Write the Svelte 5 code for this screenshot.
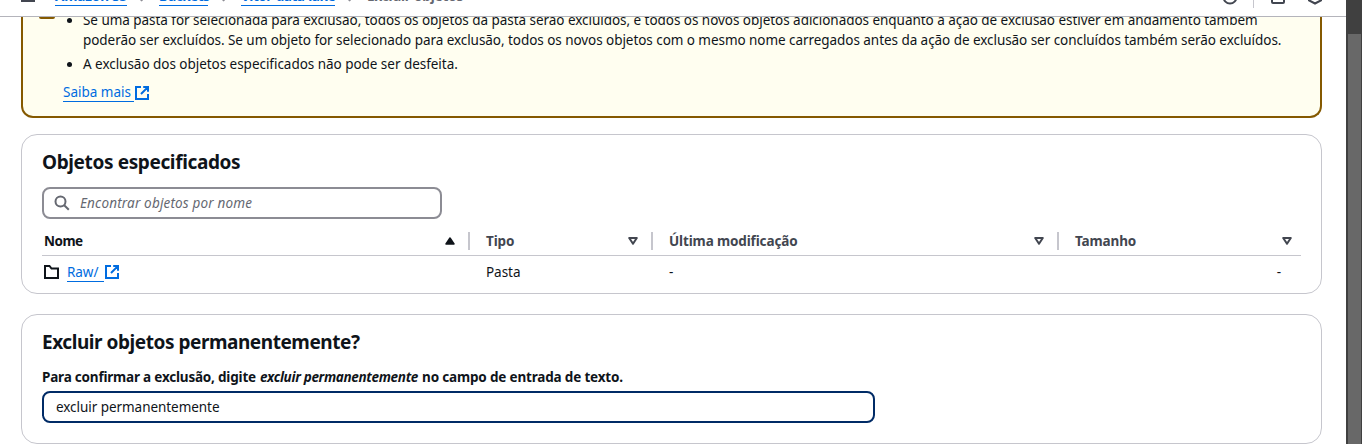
<script>
  const crumbs = ['Amazon S3', 'Buckets', 'Vitor-data-lake'];
  const columns = [
    { label: 'Nome', cls: 'nome', sorted: true },
    { label: 'Tipo', cls: 'tipo' },
    { label: 'Última modificação', cls: 'mod' },
    { label: 'Tamanho', cls: 'tam' }
  ];
  let search = $state('');
  let confirmation = $state('excluir permanentemente');
</script>

{#snippet external()}
  <svg class="external" viewBox="0 0 16 16"><path d="M7 2H2v12h12V9M9.200 2H14v4.800M7 9l6.600-6.600" /></svg>
{/snippet}

<div class="page">
  <div class="main">
    <header>
      <svg class="menu" viewBox="0 0 14 14"><path d="M0 1h14M0 6h14M0 13h14" stroke="#424650" stroke-width="2" /></svg>
      <nav>
        {#each crumbs as c, i}
          <a class="c{i}" href="#top">{c}</a>
          <svg class="chev" viewBox="0 0 6 12"><path d="M1 1l4 5-4 5" /></svg>
        {/each}
        <span class="here">Excluir objetos</span>
      </nav>
      <div class="tools">
        <svg class="t1" viewBox="0 0 16 16"><circle cx="8" cy="8" r="6.5" /></svg>
        <i></i>
        <svg class="t2" viewBox="0 0 16 16"><rect x="2" y="2" width="12" height="12" rx="1" /></svg>
        <svg class="t3" viewBox="0 0 16 16"><path d="M8 1.500l6 3.200v6.600l-6 3.200-6-3.200V4.700z" /></svg>
      </div>
    </header>

    <section class="alert">
      <span class="warn"></span>
      <div class="copy">
        <ul>
          <li>
            <span class="l1">Se uma pasta for selecionada para exclusão, todos os objetos da pasta serão excluídos, e todos os novos objetos adicionados enquanto a ação de exclusão estiver em andamento também</span>
            <span class="l2">poderão ser excluídos. Se um objeto for selecionado para exclusão, todos os novos objetos com o mesmo nome carregados antes da ação de exclusão ser concluídos também serão excluídos.</span>
          </li>
          <li><span class="l3">A exclusão dos objetos especificados não pode ser desfeita.</span></li>
        </ul>
        <a class="link more" href="#more"><span>Saiba mais</span>{@render external()}</a>
      </div>
    </section>

    <section class="card objects">
      <h2>Objetos especificados</h2>
      <label class="search">
        <svg viewBox="0 0 16 16"><circle cx="6.500" cy="6.500" r="5" /><path d="M10.200 10.200l4.600 4.600" /></svg>
        <input placeholder="Encontrar objetos por nome" bind:value={search} />
      </label>
      <div class="row head">
        {#each columns as c}
          <div class="cell {c.cls}">
            <b>{c.label}</b>
            {#if c.sorted}
              <svg class="sort" viewBox="0 0 10 8"><path d="M5 1L9 7H1z" fill="#0f141a" stroke="#0f141a" stroke-width="1.500" stroke-linejoin="round" /></svg>
            {:else}
              <svg class="sort" viewBox="0 0 10 8"><path d="M1.200 1H8.800L5 6.800z" fill="none" stroke="#424650" stroke-width="2" stroke-linejoin="round" /></svg>
            {/if}
          </div>
        {/each}
      </div>
      <div class="row body">
        <div class="cell nome">
          <svg class="folder" viewBox="0 0 16 16"><path d="M2 14V2h4.500l2 2.500H15V14z" /></svg>
          <a class="link raw" href="#raw"><span>Raw/</span>{@render external()}</a>
        </div>
        <div class="cell tipo">Pasta</div>
        <div class="cell mod">-</div>
        <div class="cell tam">-</div>
      </div>
    </section>

    <section class="card confirm">
      <h2>Excluir objetos permanentemente?</h2>
      <label class="ask" for="confirm"><span>Para confirmar a exclusão, digite</span><em>excluir permanentemente</em><span class="end">no campo de entrada de texto.</span></label>
      <input id="confirm" bind:value={confirmation} />
    </section>
  </div>
  <div class="scroll"><div class="thumb"></div></div>
</div>

<style>
  :global(body) { background: #fff; overflow: hidden; }
  * { box-sizing: border-box; }
  .page {
    display: flex; height: 444px; overflow: hidden; background: #fff; color: #0f141a;
    font: 13.5px/20px "Noto Sans", sans-serif; letter-spacing: -0.05px;
  }
  .main { flex: 1; min-width: 0; display: flex; flex-direction: column; }
  svg { display: block; flex: none; fill: none; }
  header {
    flex: none; height: 17px; overflow: hidden; border-bottom: 1px solid #b4b4bb;
    display: flex; align-items: flex-end; padding-left: 21px;
  }
  .menu { width: 14px; height: 14px; margin-bottom: 14px; }
  nav { display: flex; align-items: center; height: 20px; margin: 0 0 10px 20px; font-weight: 700; }
  nav a { color: #006ce0; text-decoration: none; border-bottom: 1px solid #006ce0; height: 20px; line-height: 20px; white-space: nowrap; }
  .c0 { width: 72px; letter-spacing: -0.1px; }
  .c1 { width: 49px; letter-spacing: -0.5px; }
  .c2 { width: 94px; letter-spacing: -0.46px; }
  .chev { width: 6px; height: 12px; margin: 0 13px; stroke: #8c8c94; stroke-width: 2; }
  .c1 + .chev { margin-left: 14px; }
  .here { color: #656871; letter-spacing: -0.17px; }
  .tools { margin-left: auto; display: flex; align-items: flex-end; stroke: #424650; stroke-width: 2; }
  .tools svg { width: 16px; height: 16px; margin-bottom: 11px; }
  .tools i { width: 1px; height: 24px; background: #c6c6cd; margin: 0 16px 8px 15px; }
  .tools .t3 { margin-left: 21px; margin-right: 23px; }

  .alert {
    flex: none; width: 1301px; height: 101px; margin-left: 21px; overflow: hidden; display: flex;
    border: 2px solid #855900; border-top: 0; border-radius: 0 0 12px 12px; background: #fffef0;
  }
  .warn { width: 16px; height: 16px; margin: -14px 8px 0 16px; border: 2px solid #855900; border-radius: 2px; flex: none; }
  .copy { margin-top: -7px; }
  ul { margin: 0; padding: 0 0 0 20px; }
  li + li { margin-top: 4px; }
  li span { display: block; white-space: nowrap; }
  .l1 { letter-spacing: -0.041px; }
  .l2 { letter-spacing: -0.053px; }
  .l3 { letter-spacing: -0.035px; }
  .link { display: flex; align-items: center; color: #006ce0; text-decoration: none; }
  .link span { border-bottom: 1px solid #006ce0; height: 19px; line-height: 18px; }
  .more { margin-top: 9px; }
  .more span { width: 71px; letter-spacing: 0; }
  .raw span { width: 37px; }
  .external { width: 16px; height: 16px; stroke: #006ce0; stroke-width: 2; }

  .card { flex: none; width: 1301px; margin-left: 21px; padding: 0 20px; border: 1px solid #c6c6cd; border-radius: 16px; }
  .objects { height: 160px; margin-top: 16px; }
  .confirm { height: 130px; margin-top: 20px; }
  h2 { margin: 15px 0 0; font-size: 19px; line-height: 24px; letter-spacing: -0.45px; }
  .objects h2 { letter-spacing: -0.37px; }
  .search { display: flex; align-items: center; width: 400px; height: 32px; margin-top: 13px; border: 2px solid #8c8c94; border-radius: 8px; padding-left: 10px; }
  .search svg { width: 16px; height: 16px; stroke: #656871; stroke-width: 2; }
  input { font: inherit; color: inherit; letter-spacing: inherit; outline: 0; }
  .search input { flex: 1; border: 0; padding: 0; margin-left: 10px; background: none; }
  .search input::placeholder { color: #656871; font-style: italic; letter-spacing: 0.17px; opacity: 1; }
  .row { display: grid; grid-template-columns: 428px 183px 406px 242px; }
  .head { height: 37px; border-bottom: 1px solid #c6c6cd; padding-top: 13px; }
  .head .cell { display: flex; align-items: center; justify-content: space-between; height: 18px; color: #424650; padding: 0 13px 0 16px; border-right: 2px solid #c6c6cd; }
  .head b { letter-spacing: -0.13px; }
  .head .nome { color: #0f141a; padding-left: 2px; }
  .head .nome b { letter-spacing: -0.5px; }
  .head .tam { border: 0; padding-right: 9px; }
  .sort { width: 10px; height: 8px; }
  .body { padding-top: 6px; }
  .body .cell { padding-left: 16px; }
  .body .nome { display: flex; align-items: center; padding-left: 1px; }
  .body .tam { text-align: right; padding-right: 20px; }
  .folder { width: 16px; height: 16px; stroke: #0f141a; stroke-width: 2; margin-right: 8px; }

  .ask { display: flex; gap: 4px; margin-top: 13px; font-weight: 700; letter-spacing: -0.2px; }
  .ask em { letter-spacing: -0.33px; }
  .ask .end { letter-spacing: -0.17px; }
  #confirm { display: block; width: 833px; height: 32px; margin-top: 4px; padding: 0 12px; border: 2px solid #002b66; border-radius: 8px; letter-spacing: -0.05px; background: #fff; }

  .scroll { width: 16px; background: #404040; padding: 34px 1px 0 2px; }
  .thumb { height: 410px; background: #686868; }
</style>
